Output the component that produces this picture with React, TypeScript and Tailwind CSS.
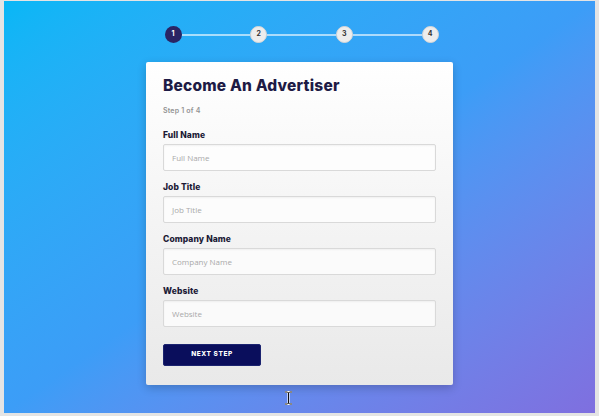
import React from "react";

const fields = ["Full Name", "Job Title", "Company Name", "Website"];

function Step({ n, active }: { n: number; active?: boolean }) {
  return (
    <div
      className={
        active
          ? "w-[17px] h-[17px] rounded-full bg-[#2a2464] text-white flex items-center justify-center text-[7px] font-bold shrink-0"
          : "w-[17px] h-[17px] rounded-full bg-[#ededed] text-[#333] border border-[#d6d6d6] flex items-center justify-center text-[7px] font-bold shrink-0"
      }
      style={{ fontFamily: "Inter, 'Noto Sans', sans-serif" }}
    >
      {n}
    </div>
  );
}

export default function App() {
  return (
    <div className="w-[599px] h-[416px] bg-[#e4e4e4] pl-[4px] pr-[4px] pt-[1px] pb-[3px] overflow-hidden">
      <div
        className="relative w-[591px] h-[412px] bg-linear-to-br from-[#07b7f6] via-[#3c9df7] to-[#7f6fdf] flex flex-col items-center"
        style={{ fontFamily: "Inter, 'Noto Sans', sans-serif" }}
      >
        <div className="mt-[25px] w-[274px] ml-[4px] flex items-center">
          <Step n={1} active />
          <div className="flex-1 h-[2px] bg-white/60" />
          <Step n={2} />
          <div className="flex-1 h-[2px] bg-white/60" />
          <Step n={3} />
          <div className="flex-1 h-[2px] bg-white/60" />
          <Step n={4} />
        </div>

        <div className="mt-[19px] w-[307px] h-[323px] rounded-[2px] bg-linear-to-b from-white to-[#e9e9e9] shadow-[0_3px_10px_rgba(0,0,0,0.2)] px-[17px] pt-[14px] pb-[19px] flex flex-col">
          <div className="h-[20px] leading-[20px] text-[15.5px] font-extrabold text-[#1e1b45] tracking-[0.2px]">
            Become An Advertiser
          </div>
          <div className="mt-[9px] h-[12px] leading-[12px] text-[7px] font-semibold text-[#929292] tracking-[0.2px]">
            Step 1 of 4
          </div>
          <div className="mt-[12px] flex flex-col gap-[10px]">
            {fields.map((f) => (
              <div key={f} className="flex flex-col gap-[3px]">
                <div className="h-[12px] leading-[12px] text-[8.5px] font-extrabold text-[#1c1a36] tracking-[0.1px]">
                  {f}
                </div>
                <div
                  className="h-[27px] w-[273px] rounded-[2px] border border-[#d9d9d9] bg-white/70 shadow-[inset_0_1px_2px_rgba(0,0,0,0.05)] flex items-center pl-[8px] text-[8px] text-[#a9a9a9]"
                  style={{ fontFamily: "'Open Sans', 'Noto Sans', sans-serif" }}
                >
                  {f}
                </div>
              </div>
            ))}
          </div>
          <div className="mt-[17px] w-[98px] h-[22px] rounded-[2px] bg-[#0a0e5c] border border-[#1c2470] flex items-center justify-center text-white text-[6.5px] font-extrabold tracking-[0.6px]">
            NEXT STEP
          </div>
        </div>

        <svg
          className="absolute left-[280px] top-[390px]"
          width="9"
          height="14"
          viewBox="0 0 9 14"
        >
          <path
            d="M1 1 H3.5 L4.5 2 L5.5 1 H8 M4.5 2 V12 M1 13 H3.5 L4.5 12 L5.5 13 H8"
            stroke="#fff"
            strokeWidth="2.2"
            fill="none"
          />
          <path
            d="M1 1 H3.5 L4.5 2 L5.5 1 H8 M4.5 2 V12 M1 13 H3.5 L4.5 12 L5.5 13 H8"
            stroke="#111"
            strokeWidth="1"
            fill="none"
          />
        </svg>
      </div>
    </div>
  );
}
